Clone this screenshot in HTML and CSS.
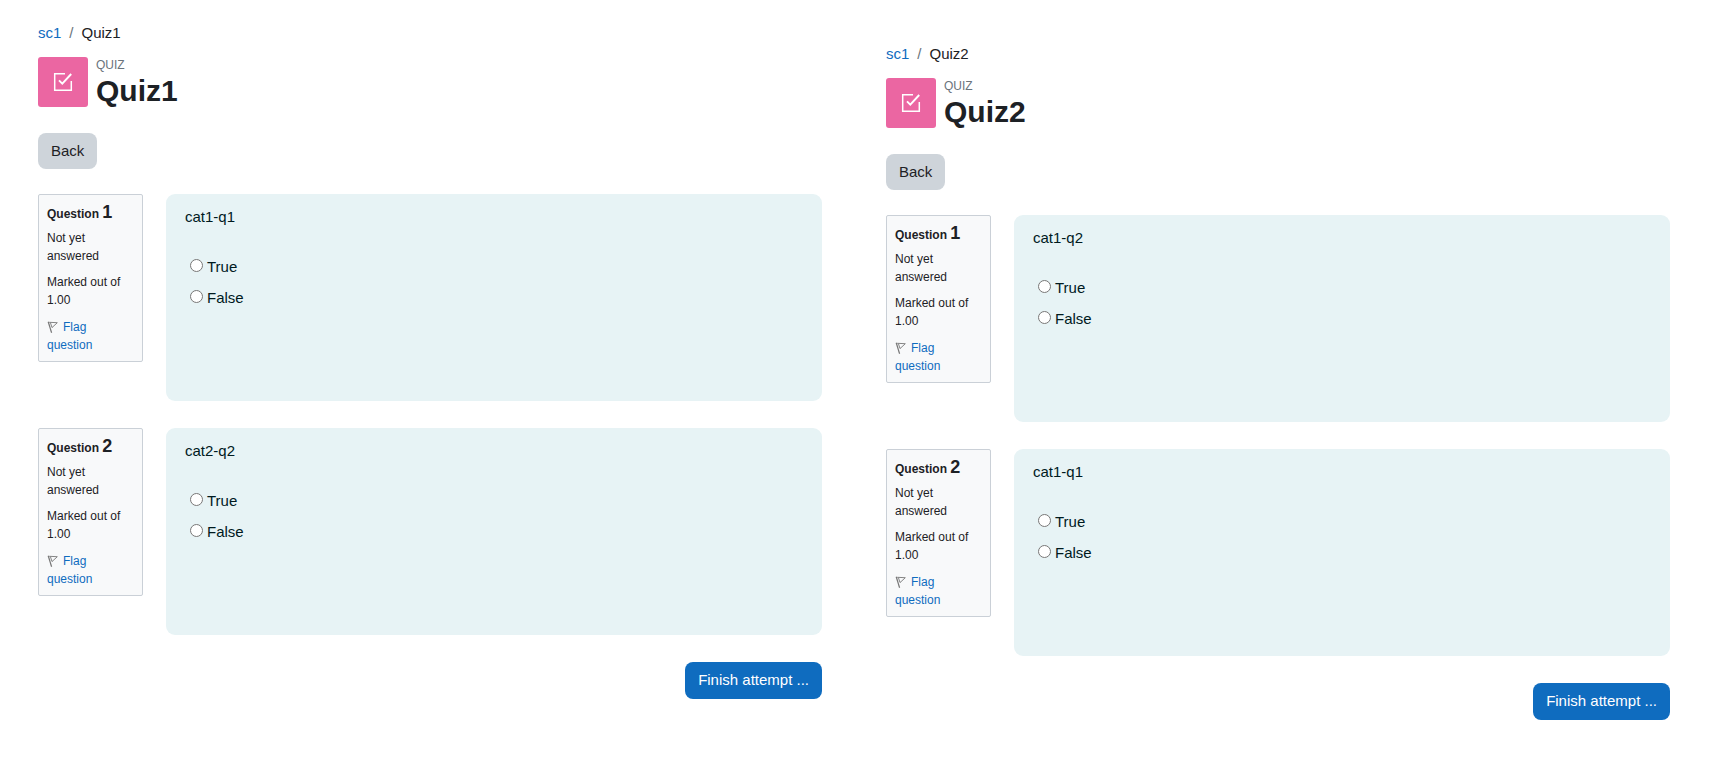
FILE: index.html
```
<!DOCTYPE html>
<html lang="en">
<head>
  <meta charset="UTF-8">
  <title>Quiz1 / Quiz2</title>
  <link rel="stylesheet" href="styles.css">
</head>
<body>
  <!-- shared icons -->
  <svg class="sprite" aria-hidden="true">
    <symbol id="icon-quiz" viewBox="0 0 20 20">
      <path d="M12 1.700H1.700V18.300H18.300V9" fill="none" stroke="#fff" stroke-width="1.500"/>
      <path d="M6 8.300L9.300 11.700L18.200 2" fill="none" stroke="#fff" stroke-width="1.900"/>
    </symbol>
    <symbol id="icon-flag" viewBox="0 0 12 14">
      <path d="M1.200 1.800L4.600 12.700" fill="none" stroke="#777" stroke-width="1.200"/>
      <path d="M2.200 2.300L10.300 2.700L5 7.600L3.400 2.600" fill="none" stroke="#777" stroke-width="0.900"/>
    </symbol>
  </svg>

  <main class="page">
    <!-- Quiz1 -->
    <section class="quiz">
      <nav class="breadcrumb">
        <a href="#">sc1</a><span class="divider">/</span><span>Quiz1</span>
      </nav>
      <header class="quiz-header">
        <div class="quiz-icon"><svg><use href="#icon-quiz"/></svg></div>
        <div>
          <div class="quiz-type">QUIZ</div>
          <h1>Quiz1</h1>
        </div>
      </header>
      <button type="button" class="btn btn-secondary">Back</button>
      <form>
        <div class="question">
          <div class="info">
            <h3>Question <span class="qno">1</span></h3>
            <p>Not yet answered</p>
            <p>Marked out of 1.00</p>
            <p class="flag-link"><a href="#"><svg class="flag"><use href="#icon-flag"/></svg>Flag question</a></p>
          </div>
          <div class="content">
            <p class="qtext">cat1-q1</p>
            <div class="answer"><input type="radio" name="a1" id="a1-true"><label for="a1-true">True</label></div>
            <div class="answer"><input type="radio" name="a1" id="a1-false"><label for="a1-false">False</label></div>
          </div>
        </div>
        <div class="question">
          <div class="info">
            <h3>Question <span class="qno">2</span></h3>
            <p>Not yet answered</p>
            <p>Marked out of 1.00</p>
            <p class="flag-link"><a href="#"><svg class="flag"><use href="#icon-flag"/></svg>Flag question</a></p>
          </div>
          <div class="content">
            <p class="qtext">cat2-q2</p>
            <div class="answer"><input type="radio" name="a2" id="a2-true"><label for="a2-true">True</label></div>
            <div class="answer"><input type="radio" name="a2" id="a2-false"><label for="a2-false">False</label></div>
          </div>
        </div>
        <div class="submit">
          <button type="button" class="btn btn-primary">Finish attempt ...</button>
        </div>
      </form>
    </section>

    <!-- Quiz2 -->
    <section class="quiz quiz-second">
      <nav class="breadcrumb">
        <a href="#">sc1</a><span class="divider">/</span><span>Quiz2</span>
      </nav>
      <header class="quiz-header">
        <div class="quiz-icon"><svg><use href="#icon-quiz"/></svg></div>
        <div>
          <div class="quiz-type">QUIZ</div>
          <h1>Quiz2</h1>
        </div>
      </header>
      <button type="button" class="btn btn-secondary">Back</button>
      <form>
        <div class="question">
          <div class="info">
            <h3>Question <span class="qno">1</span></h3>
            <p>Not yet answered</p>
            <p>Marked out of 1.00</p>
            <p class="flag-link"><a href="#"><svg class="flag"><use href="#icon-flag"/></svg>Flag question</a></p>
          </div>
          <div class="content">
            <p class="qtext">cat1-q2</p>
            <div class="answer"><input type="radio" name="b1" id="b1-true"><label for="b1-true">True</label></div>
            <div class="answer"><input type="radio" name="b1" id="b1-false"><label for="b1-false">False</label></div>
          </div>
        </div>
        <div class="question">
          <div class="info">
            <h3>Question <span class="qno">2</span></h3>
            <p>Not yet answered</p>
            <p>Marked out of 1.00</p>
            <p class="flag-link"><a href="#"><svg class="flag"><use href="#icon-flag"/></svg>Flag question</a></p>
          </div>
          <div class="content">
            <p class="qtext">cat1-q1</p>
            <div class="answer"><input type="radio" name="b2" id="b2-true"><label for="b2-true">True</label></div>
            <div class="answer"><input type="radio" name="b2" id="b2-false"><label for="b2-false">False</label></div>
          </div>
        </div>
        <div class="submit">
          <button type="button" class="btn btn-primary">Finish attempt ...</button>
        </div>
      </form>
    </section>
  </main>
</body>
</html>
```

FILE: styles.css
```
* {
  box-sizing: border-box;
}

body {
  margin: 0;
  background: #fff;
  color: #1d2125;
  font-family: "Liberation Sans", Arial, sans-serif;
  font-size: 15px;
  line-height: 23px;
}

h1, h3, p {
  margin: 0;
}

a {
  color: #0f6cbf;
  text-decoration: none;
}

.sprite {
  position: absolute;
  width: 0;
  height: 0;
}

.page {
  display: grid;
  grid-template-columns: 1fr 1fr;
  gap: 64px;
  padding: 21px 39px 21px 38px;
}

.quiz-second {
  padding-top: 21px;
}

/* Heading */
.breadcrumb {
  margin-bottom: 13px;
}

.divider {
  padding: 0 8px;
  color: #6a737b;
}

.quiz-header {
  display: flex;
  gap: 8px;
  margin-bottom: 24px;
}

.quiz-icon {
  display: flex;
  align-items: center;
  justify-content: center;
  width: 50px;
  height: 50px;
  border-radius: 3px;
  background: #eb66a2;
}

.quiz-icon svg {
  width: 20px;
  height: 20px;
}

.quiz-type {
  color: #6a737b;
  font-size: 12px;
  line-height: 16px;
}

h1 {
  font-size: 30px;
  line-height: 36px;
}

/* Buttons */
.btn {
  display: block;
  padding: 6px 13px;
  border: 0;
  border-radius: 8px;
  font: inherit;
  line-height: 24px;
  cursor: pointer;
}

.btn-secondary {
  margin-bottom: 25px;
  background: #ced4da;
  color: #1d2125;
}

.btn-primary {
  padding-bottom: 7px;
  background: #0f6cbf;
  color: #fff;
}

/* Questions */
.question {
  display: flex;
  align-items: flex-start;
  gap: 23px;
  margin-bottom: 27px;
}

.info {
  flex: 0 0 105px;
  padding: 8px 8px 7px;
  border: 1px solid #cad0d7;
  border-radius: 2px;
  background: #f8f9fa;
  font-size: 12px;
  line-height: 18px;
}

.info h3 {
  font-size: 12px;
  line-height: 18px;
}

.info p {
  margin-top: 8px;
}

.info h3 + p {
  margin-top: 6px;
}

.info .flag-link {
  margin-top: 9px;
}

.qno {
  font-size: 18px;
}

.flag {
  width: 12px;
  height: 14px;
  margin-right: 4px;
  vertical-align: -3px;
}

.content {
  flex: 1;
  min-height: 207px;
  padding: 11px 19px;
  border-radius: 9px;
  background: #e7f3f5;
  color: #001a1e;
}

.qtext {
  margin-bottom: 27px;
}

.answer {
  display: flex;
  padding: 0 5px;
  margin-bottom: 8px;
}

.answer input {
  width: 13px;
  height: 13px;
  margin: 4px 4px 0 0;
}

.submit {
  display: flex;
  justify-content: flex-end;
}
```
